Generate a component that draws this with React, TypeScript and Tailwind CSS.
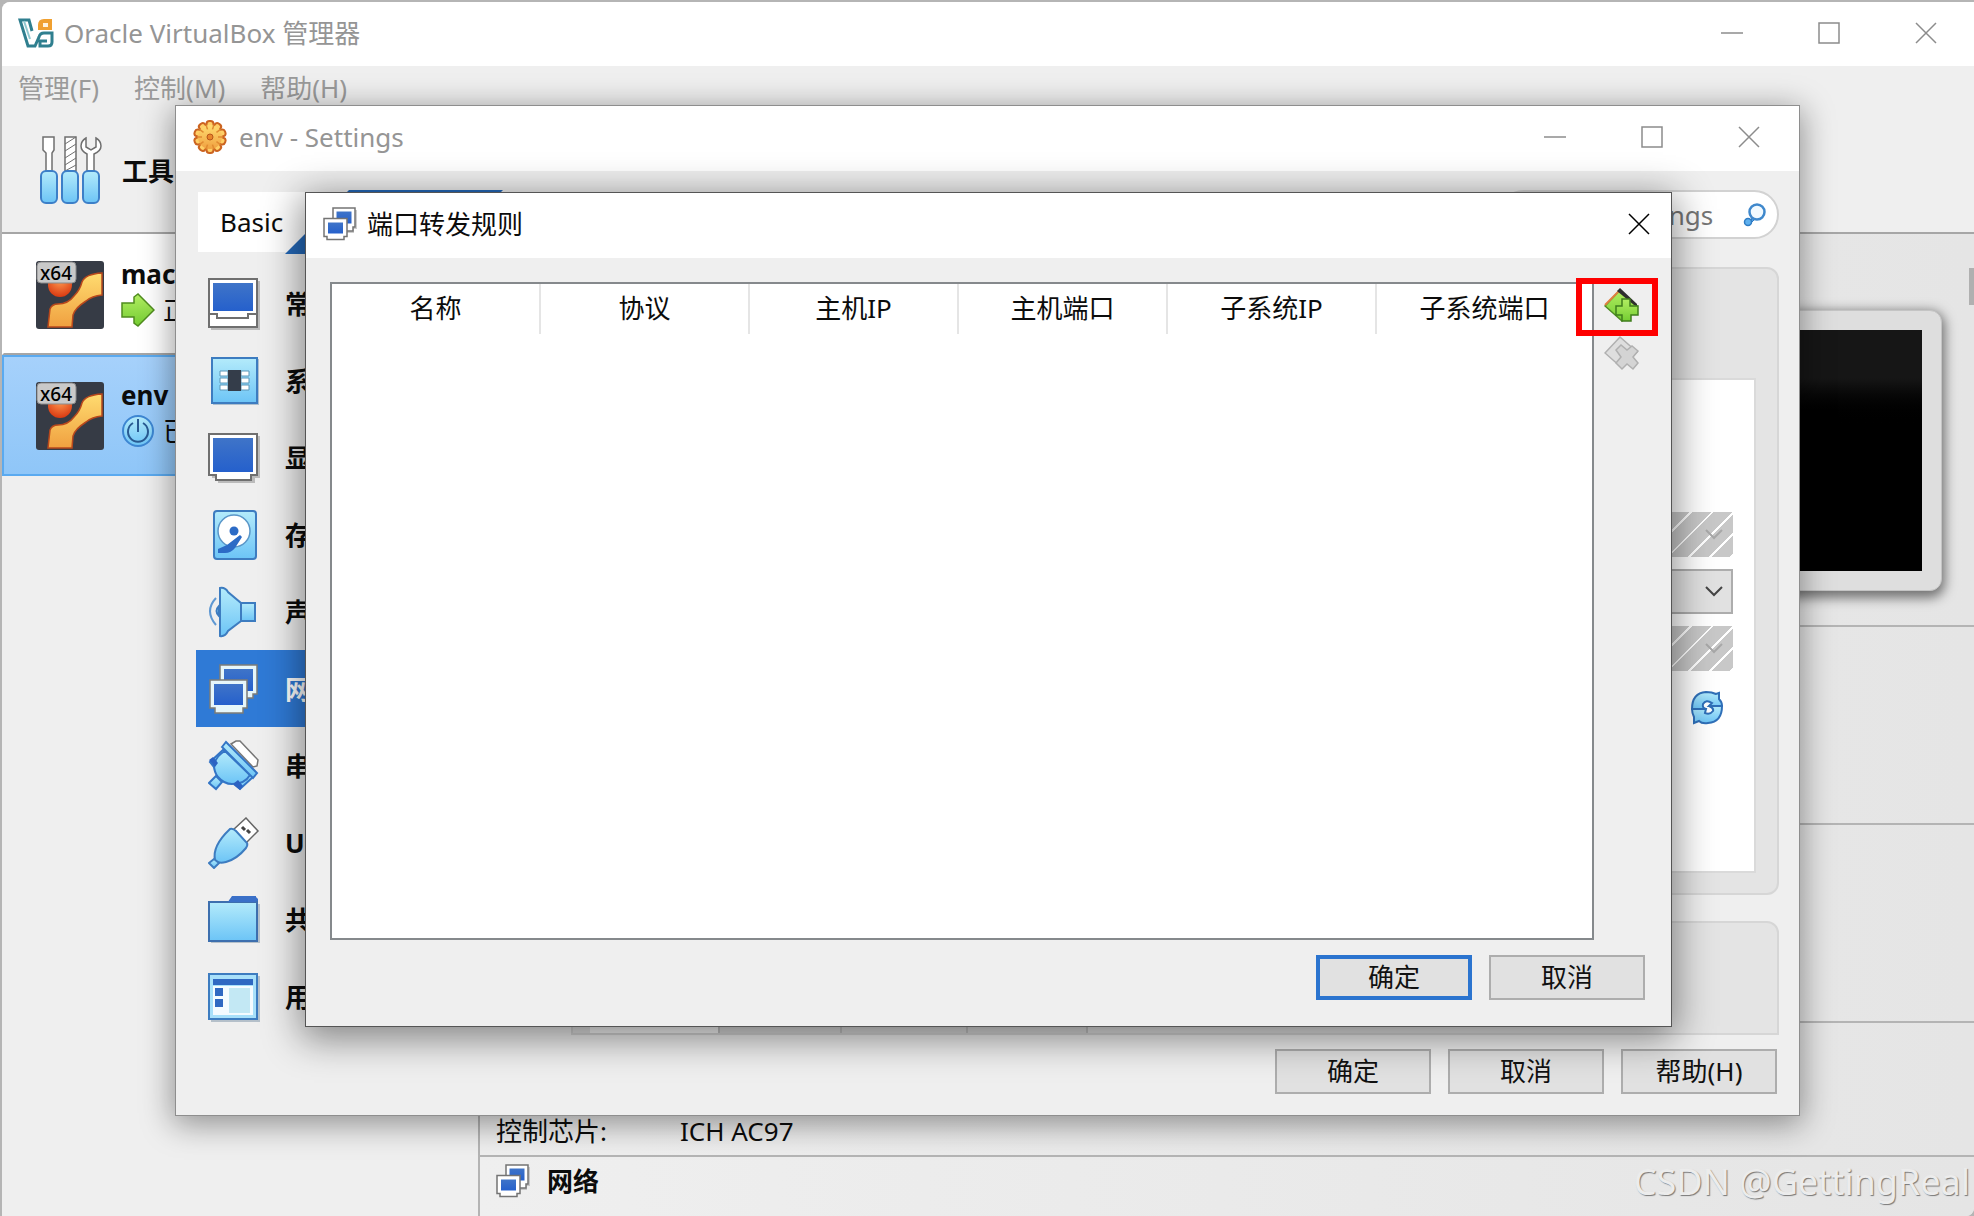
import React, { useState } from "react"
import clsx from "clsx"

const headers = ["名称", "协议", "主机IP", "主机端口", "子系统IP", "子系统端口"]

function Gradients() {
  return (
    <svg width="0" height="0" className="absolute" aria-hidden="true">
      <defs>
        <linearGradient id="sky" x1="0" y1="0" x2="0" y2="1">
          <stop offset="0" stopColor="#b4ebfb" />
          <stop offset="1" stopColor="#6cc4f6" />
        </linearGradient>
        <linearGradient id="screen" x1="0" y1="0" x2="0" y2="1">
          <stop offset="0" stopColor="#3f74c8" />
          <stop offset="1" stopColor="#2560cc" />
        </linearGradient>
        <linearGradient id="gold" x1="0" y1="0" x2="0" y2="1">
          <stop offset="0" stopColor="#ffdc70" />
          <stop offset="1" stopColor="#f0a040" />
        </linearGradient>
        <linearGradient id="lime" x1="0" y1="0" x2="0" y2="1">
          <stop offset="0" stopColor="#b2ee62" />
          <stop offset="1" stopColor="#74cc32" />
        </linearGradient>
        <radialGradient id="ball" cx="0.5" cy="0.3" r="0.7">
          <stop offset="0" stopColor="#ff9a50" />
          <stop offset="1" stopColor="#d93a12" />
        </radialGradient>
      </defs>
    </svg>
  )
}

function LogoIcon() {
  return (
    <svg width="36" height="32" viewBox="0 0 36 32" fill="none">
      <path
        d="M14 14l-3-11H2l8 26h7l4-9q1-4 5-4h8v9q0 4-4 4h-8v-5h7"
        stroke="#2f7f8f"
        strokeWidth="3"
      />
      <path d="M6 4l6 18" stroke="#8fc8d0" strokeWidth="2" />
      <path d="M20 13V8q0-6 6-6h8v11z" fill="#f0a030" />
      <path d="M25 6h5v4h-5z" fill="#fff3dc" />
    </svg>
  )
}

const teeth = [0, 36, 72, 108, 144, 180, 216, 252, 288, 324]

function GearIcon() {
  return (
    <svg width="34" height="34" viewBox="0 0 34 34">
      {teeth.map((angle) => (
        <rect
          key={angle}
          x="13.500"
          y="1"
          width="7"
          height="10"
          rx="3"
          fill="#ffcf66"
          stroke="#cc6420"
          strokeWidth="2"
          transform={`rotate(${angle} 17 17)`}
        />
      ))}
      <circle cx="17" cy="17" r="12" fill="url(#gold)" />
      {teeth.map((angle) => (
        <path
          key={angle}
          d="M17 4v5"
          stroke="#e08a30"
          strokeWidth="1.500"
          transform={`rotate(${angle + 18} 17 17)`}
        />
      ))}
      <circle cx="17" cy="17" r="3" fill="#e8862a" stroke="#b8541a" />
    </svg>
  )
}

function NetworkIcon() {
  return (
    <svg width="34" height="34" viewBox="0 0 34 34">
      <g fill="#fff" stroke="#747474" strokeWidth="1.500">
        <path d="M12 3h22v19h-3v4H14v-4h-2z" fill="#aaa" stroke="none" opacity="0.6" />
        <path d="M10 1h22v19h-2v4H13v-4h-3z" />
        <path d="M13.500 4.500h15v12h-15z" fill="url(#screen)" stroke="none" />
        <path d="M1 11.500h23v18h-3v3H4v-3H1z" />
        <path d="M5 15.500h15v11H5z" fill="url(#screen)" stroke="none" />
      </g>
    </svg>
  )
}

function NetworkLargeIcon() {
  return (
    <svg width="52" height="52" viewBox="0 0 52 52">
      <g fill="#e6f6fa" stroke="#7c7c78" strokeWidth="1.500">
        <path d="M12 2h37v29h-4v4H16v-4h-4z" />
        <path d="M16 6h29v22H16z" fill="url(#screen)" stroke="none" />
        <path d="M2 17h37v28h-4v5H7v-5H2z" />
        <path d="M6 21h29v21H6z" fill="url(#screen)" stroke="none" />
      </g>
    </svg>
  )
}

function ToolsIcon() {
  return (
    <svg width="64" height="70" viewBox="0 0 64 70">
      <g fill="#fff" stroke="#6f6f6f" strokeWidth="1.500">
        <path d="M3 1h11v13l-2 3v18H6V17l-3-3z" />
        <path d="M25 1h11v34H25z" />
        <path d="M25 8l11-7M25 15l11-7M25 22l11-7M25 29l11-7M25 35l11-6" strokeWidth="1" />
        <path d="M46 2q-5 3-5 8t6 8v17h7V18q7-3 7-8t-5-8v9l-5 3-5-3z" />
      </g>
      <g fill="url(#sky)" stroke="#3c7fc8" strokeWidth="2">
        <rect x="1" y="35" width="16" height="32" rx="5" />
        <rect x="22" y="35" width="16" height="32" rx="5" />
        <rect x="43" y="35" width="16" height="32" rx="5" />
      </g>
    </svg>
  )
}

function MachineIcon() {
  return (
    <svg width="68" height="68" viewBox="0 0 68 68" className="overflow-visible">
      <rect width="68" height="68" rx="3" fill="#363b45" />
      <circle cx="24" cy="24" r="12" fill="url(#ball)" />
      <path
        d="M12 66l2-18q2-5 8-5 10 0 16-8 6-6 8-14 3-8 20-9v22q-10 1-16 6-11 7-13 14l-1 12z"
        fill="url(#gold)"
        stroke="#b8481c"
        strokeWidth="1.500"
      />
      <rect x="1" y="1" width="39" height="21" rx="4" fill="#c9c9c9" stroke="#8a8a8a" />
      <text x="20" y="19" textAnchor="middle" fontSize="19" fontWeight="500" fill="#000">
        x64
      </text>
    </svg>
  )
}

function RunningIcon() {
  return (
    <svg width="34" height="34" viewBox="0 0 34 34">
      <path
        d="M1 10h12V4l4-3 16 16-16 16-4-3v-6H1z"
        fill="url(#lime)"
        stroke="#4f8c1e"
        strokeWidth="1.500"
      />
    </svg>
  )
}

function PowerIcon() {
  return (
    <svg width="34" height="34" viewBox="0 0 34 34" fill="none">
      <circle cx="17" cy="17" r="15" fill="url(#sky)" stroke="#3d86d2" strokeWidth="2" />
      <path d="M12 9a10 10 0 1 0 10 0M17 5v13" stroke="#285a92" strokeWidth="2" />
    </svg>
  )
}

function GeneralIcon() {
  return (
    <svg width="52" height="52" viewBox="0 0 52 52">
      <path d="M3 3h49v49H3z" fill="#bbb" />
      <path d="M1 1h48v48H1z" fill="#fff" stroke="#6f6f6f" strokeWidth="2" />
      <path d="M5 5h40v28H5z" fill="url(#screen)" />
      <path d="M1 36h8v4h31v-4h9" fill="none" stroke="#6f6f6f" strokeWidth="2" />
    </svg>
  )
}

function SystemIcon() {
  return (
    <svg width="52" height="52" viewBox="0 0 52 52">
      <path d="M5 4h46v46H5z" fill="#aebfce" />
      <path d="M4 3h45v45H4z" fill="url(#sky)" stroke="#3d7cc0" strokeWidth="2" />
      <g fill="#fff" stroke="#5a96b8">
        <path d="M12 16h8v5h-8zM12 23h8v5h-8zM12 30h8v5h-8zM33 16h8v5h-8zM33 23h8v5h-8zM33 30h8v5h-8z" />
      </g>
      <path d="M20 15h13v21H20z" fill="#343d4a" />
    </svg>
  )
}

function DisplayIcon() {
  return (
    <svg width="52" height="52" viewBox="0 0 52 52">
      <path d="M4 4h48v42h-5v5H10v-5H4z" fill="#bbb" />
      <path d="M1 2h48v41h-6v5H8v-5H1z" fill="#fff" stroke="#6f6f6f" strokeWidth="2" />
      <path d="M5 6h40v34H5z" fill="url(#screen)" />
    </svg>
  )
}

function StorageIcon() {
  return (
    <svg width="52" height="52" viewBox="0 0 52 52">
      <rect x="6" y="2" width="42" height="48" rx="3" fill="url(#sky)" stroke="#3d7cc0" strokeWidth="2" />
      <circle cx="26" cy="22" r="16" fill="#fff" stroke="#5a96c8" strokeWidth="1.500" />
      <circle cx="26" cy="22" r="4.500" fill="#2c6bc6" />
      <path d="M10 40l9-4 13-10 2 2-7 11q-4 5-10 5h-7z" fill="#2c6bc6" />
    </svg>
  )
}

function AudioIcon() {
  return (
    <svg width="52" height="52" viewBox="0 0 52 52">
      <g fill="url(#sky)" stroke="#3d7cc0" strokeWidth="2">
        <path d="M11 20q-5 5 0 10z" />
        <path d="M12 2q5-1 8 4l13 11v18L20 45q-3 6-8 5z" />
        <path d="M33 17h14v18H33z" />
      </g>
      <path d="M8 12q-12 13 0 27" fill="none" stroke="#5f98d2" strokeWidth="2" />
    </svg>
  )
}

function SerialIcon() {
  return (
    <svg width="52" height="52" viewBox="0 0 52 52">
      <path d="M23 4l5-3h4l18 19-1 6-4 1z" fill="#fff" stroke="#777" strokeWidth="1.500" />
      <g fill="url(#sky)" stroke="#3375c6" strokeWidth="2">
        <path d="M2 22l13-12 5 5L6 27z" />
        <path d="M27 45l14-13 5 4-14 13z" />
        <path d="M17 11l25 24q-5 9-18 9-8 0-14-7-4-5-4-12 2-9 11-14z" />
        <path d="M14 7l4-5 31 31-4 5z" />
        <path d="M1 43l7-7 6 6-6 7z" />
      </g>
      <path d="M1 20l6 7 3-4-5-6zM25 44l7 6 3-4-5-6z" fill="#2c62c2" />
    </svg>
  )
}

function UsbIcon() {
  return (
    <svg width="52" height="52" viewBox="0 0 52 52">
      <path d="M25 13L38 1l12 13-13 13z" fill="#fff" stroke="#666" strokeWidth="1.500" />
      <path d="M34 10l3 3M39 13l3 3" stroke="#444" strokeWidth="3" />
      <g fill="url(#sky)" stroke="#3d7cc0" strokeWidth="2">
        <path d="M22 12q3-1 6 2l11 12q1 2-1 5-9 11-20 14-8 2-11-2-3-14 15-31z" />
        <path d="M1 46l5-4 5 4-5 5z" />
      </g>
    </svg>
  )
}

function FolderIcon() {
  return (
    <svg width="52" height="52" viewBox="0 0 52 52">
      <path d="M3 10h49v39H3z" fill="#b5c0ca" />
      <path d="M19 9l5-6h24l2 2v8H19z" fill="#3a70c8" />
      <path d="M1 8h48v39H1z" fill="url(#sky)" stroke="#3d6fae" strokeWidth="2" />
      <path d="M20 8l4-6h24v6z" fill="#3a70c8" />
    </svg>
  )
}

function InterfaceIcon() {
  return (
    <svg width="52" height="52" viewBox="0 0 52 52">
      <path d="M3 5h49v46H3z" fill="#b5c0ca" />
      <path d="M1 3h48v45H1z" fill="#a8e0fa" stroke="#3d7cc0" strokeWidth="2" />
      <path d="M5 15h40v29H5z" fill="#f4fbff" />
      <path d="M5 8h40v6H5zM7 17h8v8H7zM7 28h8v8H7z" fill="#2f68c2" />
      <path d="M21 17h21v25H21z" fill="#c3e8f4" />
    </svg>
  )
}

function SearchIcon() {
  return (
    <svg width="24" height="24" viewBox="0 0 24 24">
      <path d="M9 13l3 3-4 4z" fill="#4f9ee2" stroke="#2f7cc4" />
      <circle cx="14" cy="9" r="7.500" fill="#f2faff" stroke="#3f88cc" strokeWidth="2.500" />
      <circle cx="5" cy="19" r="3.500" fill="#5fb0ee" stroke="#2f7cc4" strokeWidth="1.500" />
    </svg>
  )
}

function RefreshIcon() {
  return (
    <svg width="32" height="34" viewBox="0 0 32 34">
      <g fill="url(#sky)" stroke="#2f6fb8" strokeWidth="2">
        <path d="M1 18Q1 2 15 1q6 0 10 2l3-1v6q3 3 3 7H18l3-3q-6-4-9 1-1 4 3 5z" />
        <path d="M31 15q0 16-14 17-6 1-9-2l-5 2v-6q-2-4-2-8h14l-1 4q5 2 8-2 1-3-4-5z" />
      </g>
    </svg>
  )
}

function AddRuleIcon() {
  return (
    <svg width="36" height="36" viewBox="0 0 36 36">
      <path d="M1 18L16 2l17 16-15 15z" fill="url(#lime)" stroke="#4d8a22" strokeWidth="1.500" />
      <path d="M1 17L15 3" stroke="#e08040" strokeWidth="2" />
      <path d="M13 3l3-3 17 16v2l-3-1z" fill="#2e2e2e" />
      <path
        d="M18 11h8v7h8v9h-7v6h-9v-6h-6v-9h6z"
        fill="url(#lime)"
        stroke="#3f7d1c"
        strokeWidth="1.500"
      />
    </svg>
  )
}

function RemoveRuleIcon() {
  return (
    <svg width="36" height="36" viewBox="0 0 36 36" stroke="#b0b0b0" strokeWidth="1.500">
      <path d="M1 18L16 2l17 15-15 16z" fill="#dedede" />
      <path d="M12 15l5-5 6 5 5-4 6 5-5 6 5 6-5 6-6-5-5 5-6-6 5-6z" fill="#d4d4d4" />
    </svg>
  )
}

function Chevron({ className = "" }) {
  return (
    <svg width="20" height="12" viewBox="0 0 20 12" className={className} fill="none">
      <path d="M2 1l8 8 8-8" stroke="currentColor" strokeWidth="2" />
    </svg>
  )
}

const ControlBtn = ({ label, className = "w-[97px]", children }: any) => (
  <button aria-label={label} className={clsx("flex h-full items-center justify-center", className)}>
    <svg width="22" height="22" viewBox="0 0 22 22" fill="none" stroke="currentColor" strokeWidth="1.500">
      {children}
    </svg>
  </button>
)

const closePath = <path d="M1 1l20 20M21 1L1 21" />

function WindowControls() {
  return (
    <div className="flex h-full text-[#8c8c8c]">
      <ControlBtn label="Minimize">
        <path d="M0 11h22" />
      </ControlBtn>
      <ControlBtn label="Maximize">
        <path d="M1 1h20v20H1z" />
      </ControlBtn>
      <ControlBtn label="Close">{closePath}</ControlBtn>
    </div>
  )
}

const PushBtn = ({ primary = false, children }: any) => (
  <button
    className={clsx(
      "h-[45px] w-[156px] bg-[#e1e1e1] pb-0.5 leading-8 text-[#111]",
      primary ? "border-4 border-[#2b74cf]" : "border-2 border-[#adadad]",
    )}
  >
    {children}
  </button>
)

function SettingSelect({ label, disabled = false }: any) {
  return (
    <div className="relative w-4/5">
      <select
        aria-label={label}
        disabled={disabled}
        className={clsx(
          "block h-[45px] w-full appearance-none",
          disabled
            ? "bg-[repeating-linear-gradient(135deg,#c8c8c8_0px,#c8c8c8_13px,#ffffff_13px,#ffffff_15px)]"
            : "border-2 border-[#adadad] bg-[#e1e1e1]",
        )}
      />
      <Chevron
        className={clsx(
          "pointer-events-none absolute right-[9px] top-[17px]",
          disabled ? "text-[#a8a8a8]" : "text-[#444]",
        )}
      />
    </div>
  )
}

const categories = [
  { name: "常规", icon: <GeneralIcon /> },
  { name: "系统", icon: <SystemIcon /> },
  { name: "显示", icon: <DisplayIcon /> },
  { name: "存储", icon: <StorageIcon /> },
  { name: "声音", icon: <AudioIcon /> },
  { name: "网络", icon: <NetworkLargeIcon /> },
  { name: "串口", icon: <SerialIcon /> },
  { name: "USB设备", icon: <UsbIcon /> },
  { name: "共享文件夹", icon: <FolderIcon /> },
  { name: "用户界面", icon: <InterfaceIcon /> },
]

const machines = [
  { name: "mac", state: "正在运行", icon: <RunningIcon /> },
  { name: "env", state: "已关闭", icon: <PowerIcon /> },
]

function ManagerWindow() {
  return (
    <div className="flex flex-1 flex-col overflow-hidden rounded-tl-lg rounded-br-lg bg-[#efefef]">
      <header className="flex h-16 shrink-0 items-center bg-white pb-0.5 pl-4 text-[#959595]">
        <LogoIcon />
        <h1 className="ml-2.5 flex-1">Oracle VirtualBox 管理器</h1>
        <WindowControls />
      </header>
      <nav className="flex h-[46px] shrink-0 items-center gap-[35px] pb-0.5 pl-4 text-[#9a9a9a]">
        <button>管理(F)</button>
        <button>控制(M)</button>
        <button>帮助(H)</button>
      </nav>
      <div className="flex h-[122px] shrink-0 items-center border-b-2 border-[#a6a6a6] pb-0.5 pl-[38px]">
        <ToolsIcon />
        <span className="ml-[18px] font-bold">工具</span>
      </div>
      <div className="flex flex-1">
        <ul className="w-[476px] shrink-0">
          {machines.map((machine) => (
            <li
              key={machine.name}
              className={clsx(
                "flex h-[121px] items-center border-2 pl-8",
                machine.name === "env"
                  ? "border-[#5aaaf0] bg-linear-to-b from-[#a6d1fb] to-[#8fc6f8]"
                  : "border-transparent border-b-[#a6a6a6] bg-white",
              )}
            >
              <MachineIcon />
              <div className="ml-[17px] pb-1.5">
                <div className="h-9 font-bold leading-9">{machine.name}</div>
                <div className="flex items-center gap-2 whitespace-nowrap leading-9">
                  {machine.icon}
                  {machine.state}
                </div>
              </div>
            </li>
          ))}
        </ul>
        <main className="flex min-w-0 flex-1 flex-col border-l-2 border-[#b4b4b4] bg-linear-to-r from-[#efefef] to-[#e5e5e5]">
          <section className="flex h-[393px] items-start justify-end border-b-2 border-[#b4b4b4] pr-8 pt-[76px]">
            <div className="h-[281px] w-[440px] rounded-xl border border-[#c4c4c4] bg-[#dedede] p-[19px] shadow-[0_4px_12px_3px_rgba(0,0,0,0.5)]">
              <div className="h-full bg-linear-to-b from-[#161616] from-20% to-black to-40%" />
            </div>
          </section>
          <section className="h-[198px] border-b-2 border-[#b4b4b4]" />
          <section className="h-[198px] border-b-2 border-[#b4b4b4]" />
          <section className="flex h-[134px] items-end border-b-2 border-[#b4b4b4] pb-1.5 pl-4">
            <dl className="flex leading-9">
              <dt className="w-[184px]">控制芯片:</dt>
              <dd>ICH AC97</dd>
            </dl>
          </section>
          <section className="flex items-center gap-[17px] pl-4 pt-1.5">
            <NetworkIcon />
            <h2 className="font-bold leading-9">网络</h2>
          </section>
        </main>
      </div>
    </div>
  )
}

function SettingsWindow() {
  const [active, setActive] = useState("网络")

  return (
    <div className="absolute left-[175px] right-[174px] top-[105px] border border-[#8e8e8e] bg-[#efefef] shadow-[0_6px_30px_2px_rgba(0,0,0,0.4)]">
      <header className="flex h-[65px] items-center bg-white pb-[3px] pl-[17px] pr-0.5 text-[#959595]">
        <GearIcon />
        <h2 className="ml-3 flex-1">env - Settings</h2>
        <WindowControls />
      </header>
      <div className="flex h-[94px] items-start justify-between pl-[22px] pr-5 pt-[19px]">
        <div className="flex">
          <button className="mt-0.5 h-[60px] w-[151px] bg-white pl-[22px] text-left">Basic</button>
          <button
            aria-label="Expert"
            className="-ml-16 h-16 w-[218px] bg-[#2468b8] [clip-path:polygon(64px_0,100%_0,154px_100%,0_100%)]"
          />
        </div>
        <div className="relative w-[280px]">
          <input
            type="text"
            aria-label="Search settings"
            placeholder="Search settings"
            className="h-[49px] w-full rounded-full border-2 border-[#d2d2d2] bg-white pl-[26px] pr-14 placeholder:text-[#757575]"
          />
          <div className="pointer-events-none absolute right-3 top-[13px]">
            <SearchIcon />
          </div>
        </div>
      </div>
      <div className="flex">
        <ul className="w-[395px] shrink-0 pl-5">
          {categories.map((item) => (
            <li key={item.name}>
              <button
                onClick={() => setActive(item.name)}
                className={clsx(
                  "flex h-[77px] w-full items-center gap-[25px] pl-3 font-bold",
                  active === item.name && "bg-[#2f7ad6] text-white",
                )}
              >
                {item.icon}
                {item.name}
              </button>
            </li>
          ))}
        </ul>
        <div className="mr-5 flex flex-1 flex-col pt-0.5">
          <div className="h-[628px] rounded-xl border-2 border-[#d6d6d6] bg-[#e4e4e4] px-[21px] pb-5 pt-[109px]">
            <div className="flex h-full flex-col items-end gap-3 border-2 border-[#dadada] bg-white pr-[21px] pt-[132px]">
              <SettingSelect label="名称" disabled />
              <SettingSelect label="控制芯片" />
              <SettingSelect label="混杂模式" disabled />
              <button aria-label="Refresh" className="mr-2.5 mt-2">
                <RefreshIcon />
              </button>
            </div>
          </div>
          <div className="mt-[26px] flex flex-1 items-end rounded-t-xl border-2 border-[#d6d6d6] bg-[#e4e4e4]">
            <div className="ml-[17px] h-5 w-[128px] bg-[#fafafa]" />
            <div className="h-5 w-[122px] border-l-2 border-[#c4c4c4] bg-[#dcdcdc]" />
            <div className="h-5 w-[126px] border-l-2 border-[#c4c4c4] bg-[#dcdcdc]" />
            <div className="h-5 w-[122px] border-x-2 border-[#c4c4c4] bg-[#dcdcdc]" />
          </div>
        </div>
      </div>
      <footer className="flex justify-end gap-[17px] pb-[21px] pr-[22px] pt-3.5">
        <PushBtn>确定</PushBtn>
        <PushBtn>取消</PushBtn>
        <PushBtn>帮助(H)</PushBtn>
      </footer>
    </div>
  )
}

function PortForwardingDialog() {
  return (
    <div
      role="dialog"
      aria-labelledby="rules-title"
      className="absolute left-[305px] right-[302px] top-[192px] border border-[#555] bg-[#efefef] shadow-[0_8px_36px_4px_rgba(0,0,0,0.45)]"
    >
      <header className="flex h-[65px] items-center bg-white pb-[3px] pl-[17px]">
        <NetworkIcon />
        <h2 id="rules-title" className="ml-2.5 flex-1">
          端口转发规则
        </h2>
        <ControlBtn label="关闭" className="w-16 text-black">
          {closePath}
        </ControlBtn>
      </header>
      <div className="flex pl-6 pt-6">
        <div className="h-[658px] flex-1 border-2 border-[#85898c] bg-white">
          <table className="w-full table-fixed border-separate border-spacing-0">
            <thead>
              <tr>
                {headers.map((header) => (
                  <th
                    key={header}
                    scope="col"
                    className="h-[50px] w-[209px] border-r-2 border-[#e5e5e5] p-0 pb-0.5 font-normal last:w-auto last:border-r-0"
                  >
                    {header}
                  </th>
                ))}
              </tr>
            </thead>
          </table>
        </div>
        <div className="flex w-[77px] flex-col gap-[11px] pl-2.5 pt-1.5">
          <button aria-label="添加规则" className="w-9">
            <AddRuleIcon />
          </button>
          <button aria-label="删除规则" className="w-9" disabled>
            <RemoveRuleIcon />
          </button>
        </div>
      </div>
      <footer className="flex justify-end gap-[17px] pb-[26px] pr-[26px] pt-[15px]">
        <PushBtn primary>确定</PushBtn>
        <PushBtn>取消</PushBtn>
      </footer>
      <div className="pointer-events-none absolute right-[13px] top-[85px] h-[58px] w-[82px] border-[6px] border-[#fe0000]" />
    </div>
  )
}

function App() {
  return (
    <div className="relative flex min-h-screen flex-col overflow-hidden bg-[#b5b5b5] pl-0.5 pt-0.5 font-['Noto_Sans','Noto_Sans_CJK_SC',sans-serif] text-[26px] leading-8 text-[#0c0c0c]">
      <Gradients />
      <ManagerWindow />
      <SettingsWindow />
      <PortForwardingDialog />
      <div className="absolute right-0 top-[268px] h-[37px] w-[5px] bg-[#b0b0b0]" />
      <div className="pointer-events-none absolute bottom-2.5 right-1 text-[36px] leading-[48px] text-[#ececec] [text-shadow:1px_1px_1px_#777]">
        CSDN @GettingReal
      </div>
    </div>
  )
}

export default App
